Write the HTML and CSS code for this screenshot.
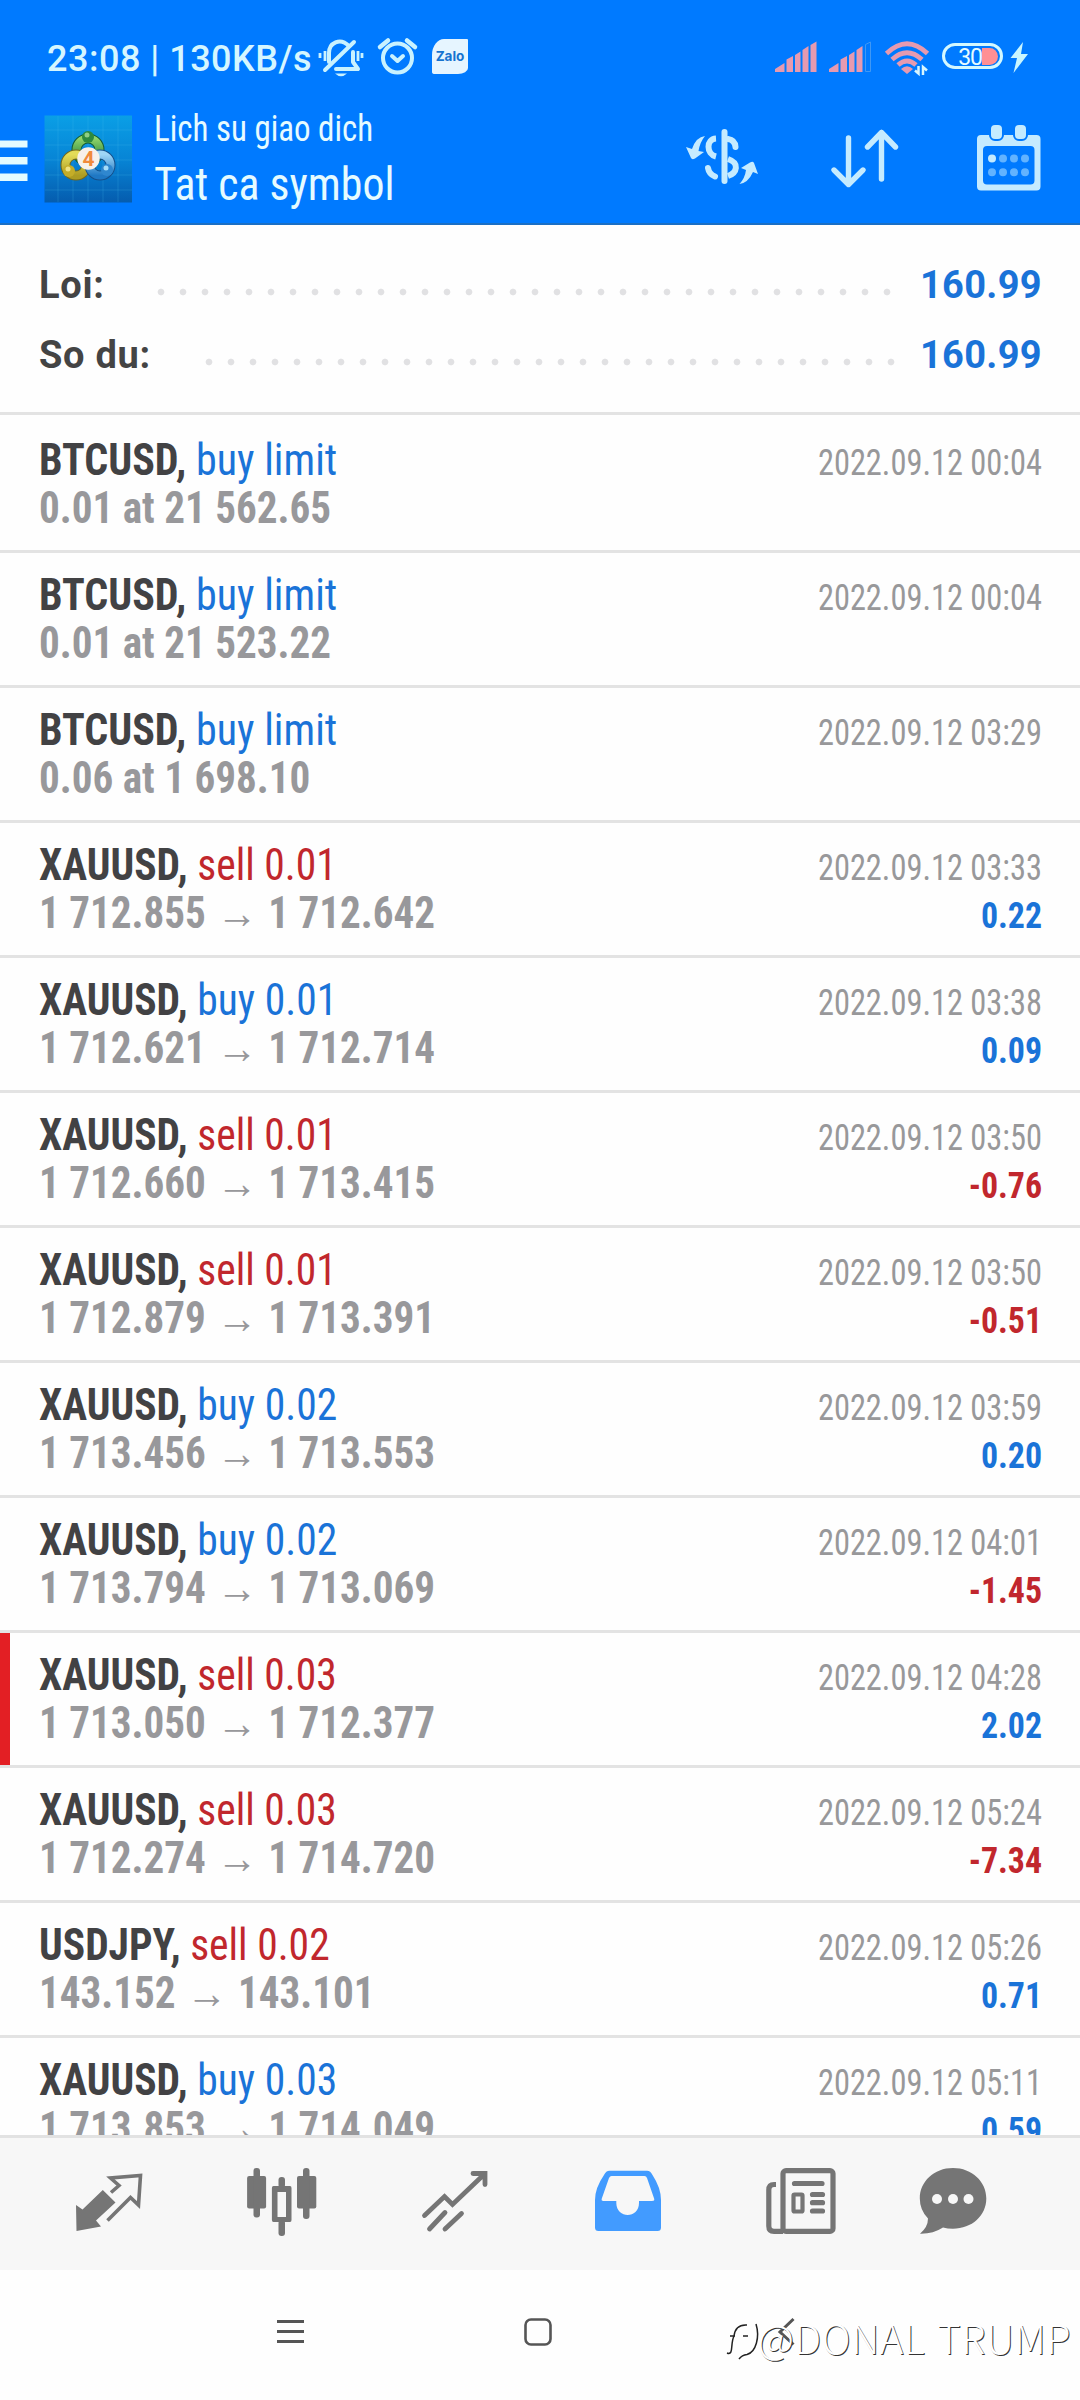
FILE: index.html
```html
<!DOCTYPE html>
<html lang="vi">
<head>
<meta charset="utf-8">
<title>Lich su giao dich</title>
<link rel="stylesheet" href="styles.css">
</head>
<body>
<div class="screen">
  <header class="header">
    <div class="status">
      <span class="status-text">23:08 | 130KB/s</span>
      <svg class="bell" width="46" height="42" viewBox="318 38 46 42" fill="none" stroke="#c9f2ff" stroke-width="4" stroke-linecap="round" stroke-linejoin="round">
        <path d="M350 46C341 37 330 43 330 53V62M354 52V62L359 69H337M326 70L355 42"/>
        <path d="M326 51V61M321 53V58M359 51V61M363 53V58" stroke-width="2.8" stroke-linecap="butt"/>
        <path d="M336 73.5H348Q342 79 336 73.5Z" fill="#c9f2ff" stroke="none"/>
      </svg>
      <svg class="alarm" width="40" height="42" viewBox="378 38 40 42" fill="none" stroke="#c9f2ff" stroke-width="4" stroke-linecap="round" stroke-linejoin="round">
        <circle cx="397.5" cy="58" r="14.500"/>
        <path d="M392 56L397.500 61L403 56"/>
        <path d="M380 47L388 40.500M415 47L407 40.500" stroke-width="4.500"/>
      </svg>
      <span class="zalo">Zalo</span>
      <svg class="signals" width="98" height="42" viewBox="774 38 98 42" fill="#e69ab0">
        <path d="M775 72V69L784.500 63V72ZM786.500 72V59.500L793 56V72ZM795 72V55L800.500 51.500V72ZM802.500 72V50L808.500 46V72ZM810.500 72V45L816.500 41.500V72Z"/>
        <path d="M829 72V69L838.500 63V72ZM840.500 72V59.500L847 56V72ZM849 72V55L854.500 51.500V72ZM856.500 72V50L862.500 46V72Z"/>
        <path d="M865.500 71.500V44.500L870.500 42V71.500Z" fill="none" stroke="#4098f4"/>
      </svg>
      <svg class="wifi" width="45" height="42" viewBox="884 38 45 42" fill="none" stroke="#e69ab0" stroke-width="4.800">
        <path d="M886.500 53.500Q907 34 927.500 53.500M892 59.500Q907 46 922 59.500M898 65Q907 57 916 65"/>
        <path d="M901 69Q907 63.500 913 69L907 74Z" fill="#e69ab0" stroke="none"/>
        <path d="M918.500 66V73.500L915 70.500M923 75V67L927 70.500" stroke="#d8f6ff" stroke-width="2.500"/>
      </svg>
      <span class="battery"><b class="charge"></b><span class="percent">30</span></span>
      <svg class="bolt" width="18" height="42" viewBox="1009 38 18 42" fill="#c9f6ff"><path d="M1022 42L1009.500 58H1016L1012.500 73L1027 54H1020Z"/></svg>
    </div>
    <div class="appbar">
      <svg width="28" height="97" viewBox="0 122 28 97" fill="#e4fbff"><path d="M0 140.500H27.500V147.500H0ZM0 157H27.500V164.500H0ZM0 173.500H27.500V181H0Z"/></svg>
      <svg class="logo" width="88" height="97" viewBox="44 122 88 97">
        <defs>
          <linearGradient id="tile" x1="0" y1="0" x2="0" y2="1"><stop offset="0" stop-color="#0a9fe6"/><stop offset=".5" stop-color="#0785d6"/><stop offset="1" stop-color="#055cae"/></linearGradient>
          <linearGradient id="green" x1="0" y1="0" x2="0" y2="1"><stop offset="0" stop-color="#8fd46a"/><stop offset="1" stop-color="#1c7a36"/></linearGradient>
          <linearGradient id="gold" x1="0" y1="0" x2="0" y2="1"><stop offset="0" stop-color="#e3dc58"/><stop offset="1" stop-color="#ad9c22"/></linearGradient>
          <linearGradient id="sky" x1="0" y1="0" x2="0" y2="1"><stop offset="0" stop-color="#9fd6f6"/><stop offset="1" stop-color="#1f78c4"/></linearGradient>
        </defs>
        <rect x="44.500" y="115.500" width="87.500" height="87" fill="url(#tile)"/>
        <path d="M58 116V202M73 116V202M88 116V202M103 116V202M118 116V202M45 130H132M45 145H132M45 160H132M45 175H132M45 190H132" stroke="#4cc0f0" stroke-opacity=".22" fill="none"/>
        <g fill="none" stroke-width="8">
          <circle cx="88" cy="150" r="11.500" stroke="#145c34" stroke-width="10"/><circle cx="88" cy="150" r="11.500" stroke="url(#green)"/>
          <circle cx="76" cy="165" r="10.500" stroke="#74691b" stroke-width="10"/><circle cx="76" cy="165" r="10.500" stroke="url(#gold)"/>
          <circle cx="100" cy="165" r="10.500" stroke="#154f8a" stroke-width="10"/><circle cx="100" cy="165" r="10.500" stroke="url(#sky)"/>
        </g>
        <circle cx="88" cy="137" r="6" fill="#2d8a3e"/><circle cx="87" cy="135" r="2.500" fill="#8fce84"/>
        <circle cx="69" cy="171" r="6" fill="#c4ad28"/><circle cx="68" cy="169" r="2.500" fill="#efe384"/>
        <circle cx="107" cy="170" r="6" fill="#2f87cf"/><circle cx="106" cy="168" r="2.500" fill="#a5dcf8"/>
        <circle cx="88.500" cy="158.500" r="11.200" fill="#f7f1ea"/>
        <text class="logo-digit" x="88.500" y="166" text-anchor="middle">4</text>
      </svg>
      <div class="titles">
        <span class="subtitle">Lich su giao dich</span>
        <span class="title">Tat ca symbol</span>
      </div>
      <div class="actions">
        <svg width="72" height="97" viewBox="686 122 72 97" fill="none" stroke="#c5ebff" stroke-width="6" stroke-linecap="round">
          <path d="M724.500 132V181"/>
          <path d="M716 138.500C706 139 706 154 716 156.500" stroke-linecap="butt"/>
          <path d="M728 139Q735 140 735.500 147"/>
          <path d="M728 159C740 163 737 173 728 176" stroke-linecap="butt"/>
          <path d="M708 168Q709 174 715 176.500"/>
          <path d="M705 136Q696 137 692 149L686 147L691 158Q692 160 695 158.500L704 152L698.500 151Q700 142 705 136Z" fill="#c5ebff" stroke="none"/>
          <path d="M739.500 184Q748 183 753 172L758 174L754 163Q753 161 750 162.500L741 168L746 170Q745 178 739.500 184Z" fill="#c5ebff" stroke="none"/>
        </svg>
        <svg width="68" height="97" viewBox="831 122 68 97" fill="none" stroke="#c5ebff" stroke-width="5.400" stroke-linecap="round" stroke-linejoin="round">
          <path d="M848.500 138V184.500M834 170L848.500 184.500L863 170M881.500 179V132.500M867.500 147L881.500 132.500L895.500 147"/>
        </svg>
        <svg width="64" height="97" viewBox="977 122 64 97">
          <path d="M981 135H1036.500Q1040.500 135 1040.500 139V186.500Q1040.500 190.500 1036.500 190.500H981Q977 190.500 977 186.500V139Q977 135 981 135ZM987 146Q983 146 983 150V180.500Q983 184.500 987 184.500H1030.500Q1034.500 184.500 1034.500 180.500V150Q1034.500 146 1030.500 146Z" fill="#c5ebff" fill-rule="evenodd"/>
          <g fill="#c5ebff" stroke="#007aff" stroke-width="2"><rect x="990" y="124" width="13" height="16" rx="5"/><rect x="1014" y="124" width="13" height="16" rx="5"/></g>
          <g fill="#62b3ff"><circle cx="1003" cy="158.500" r="4"/><circle cx="1014" cy="158.500" r="4"/><circle cx="1025" cy="158.500" r="4"/><circle cx="992" cy="172.300" r="4"/><circle cx="1003" cy="172.300" r="4"/><circle cx="1014" cy="172.300" r="4"/><circle cx="1025" cy="172.300" r="4"/></g>
          <circle cx="992" cy="158.500" r="4" fill="#c5ebff"/>
        </svg>
      </div>
    </div>
  </header>

  <section class="summary">
    <div class="sum-row"><span class="sum-label">Loi:</span><i class="dots"></i><span class="sum-value">160.99</span></div>
    <div class="sum-row"><span class="sum-label">So du:</span><i class="dots short"></i><span class="sum-value">160.99</span></div>
  </section>

  <main class="list">
    <article class="row first"><div class="left"><p class="deal limit"><b>BTCUSD,</b> <span class="buy">buy limit</span></p><p class="price">0.01 at 21 562.65</p></div><div class="right"><time>2022.09.12 00:04</time></div></article>
    <article class="row"><div class="left"><p class="deal limit"><b>BTCUSD,</b> <span class="buy">buy limit</span></p><p class="price">0.01 at 21 523.22</p></div><div class="right"><time>2022.09.12 00:04</time></div></article>
    <article class="row"><div class="left"><p class="deal limit"><b>BTCUSD,</b> <span class="buy">buy limit</span></p><p class="price">0.06 at 1 698.10</p></div><div class="right"><time>2022.09.12 03:29</time></div></article>
    <article class="row"><div class="left"><p class="deal"><b>XAUUSD,</b> <span class="sell">sell 0.01</span></p><p class="price">1 712.855<span class="to">→</span>1 712.642</p></div><div class="right"><time>2022.09.12 03:33</time><span class="profit buy">0.22</span></div></article>
    <article class="row"><div class="left"><p class="deal"><b>XAUUSD,</b> <span class="buy">buy 0.01</span></p><p class="price">1 712.621<span class="to">→</span>1 712.714</p></div><div class="right"><time>2022.09.12 03:38</time><span class="profit buy">0.09</span></div></article>
    <article class="row"><div class="left"><p class="deal"><b>XAUUSD,</b> <span class="sell">sell 0.01</span></p><p class="price">1 712.660<span class="to">→</span>1 713.415</p></div><div class="right"><time>2022.09.12 03:50</time><span class="profit sell">-0.76</span></div></article>
    <article class="row"><div class="left"><p class="deal"><b>XAUUSD,</b> <span class="sell">sell 0.01</span></p><p class="price">1 712.879<span class="to">→</span>1 713.391</p></div><div class="right"><time>2022.09.12 03:50</time><span class="profit sell">-0.51</span></div></article>
    <article class="row"><div class="left"><p class="deal"><b>XAUUSD,</b> <span class="buy">buy 0.02</span></p><p class="price">1 713.456<span class="to">→</span>1 713.553</p></div><div class="right"><time>2022.09.12 03:59</time><span class="profit buy">0.20</span></div></article>
    <article class="row"><div class="left"><p class="deal"><b>XAUUSD,</b> <span class="buy">buy 0.02</span></p><p class="price">1 713.794<span class="to">→</span>1 713.069</p></div><div class="right"><time>2022.09.12 04:01</time><span class="profit sell">-1.45</span></div></article>
    <article class="row marked"><div class="left"><p class="deal"><b>XAUUSD,</b> <span class="sell">sell 0.03</span></p><p class="price">1 713.050<span class="to">→</span>1 712.377</p></div><div class="right"><time>2022.09.12 04:28</time><span class="profit buy">2.02</span></div></article>
    <article class="row"><div class="left"><p class="deal"><b>XAUUSD,</b> <span class="sell">sell 0.03</span></p><p class="price">1 712.274<span class="to">→</span>1 714.720</p></div><div class="right"><time>2022.09.12 05:24</time><span class="profit sell">-7.34</span></div></article>
    <article class="row"><div class="left"><p class="deal"><b>USDJPY,</b> <span class="sell">sell 0.02</span></p><p class="price">143.152<span class="to">→</span>143.101</p></div><div class="right"><time>2022.09.12 05:26</time><span class="profit buy">0.71</span></div></article>
    <article class="row"><div class="left"><p class="deal"><b>XAUUSD,</b> <span class="buy">buy 0.03</span></p><p class="price">1 713.853<span class="to">→</span>1 714.049</p></div><div class="right"><time>2022.09.12 05:11</time><span class="profit buy">0.59</span></div></article>
  </main>

  <nav class="tabs">
    <a class="tab"><svg width="76" height="88" viewBox="70.500 2160 76 88"><path d="M102.300 2190L115 2202.500L95.500 2220.500L100.500 2226.500L76 2231L75.500 2205L82 2209.500Z" fill="#757575"/><path d="M110.500 2192.500L118.500 2185.500L110 2178L140 2175.500L138 2205L130 2197.500L107 2220.500" fill="none" stroke="#757575" stroke-width="3.600"/></svg></a>
    <a class="tab"><svg width="76" height="88" viewBox="243.500 2160 76 88" fill="#757575"><rect x="246.600" y="2176" width="19" height="32.500" rx="2"/><rect x="253" y="2168" width="6.500" height="49.500" rx="3"/><path d="M273 2186H289.500Q291 2186 291 2188V2220Q291 2222 289.500 2222H273Q271.400 2222 271.400 2220V2188Q271.400 2186 273 2186ZM277 2192V2217H285.500V2192Z" fill-rule="evenodd"/><rect x="278" y="2177" width="6.500" height="11" rx="3"/><rect x="278" y="2220" width="6.500" height="16" rx="3"/><rect x="296.500" y="2176" width="19.300" height="32.500" rx="2"/><rect x="302.500" y="2168" width="6.500" height="51" rx="3"/></svg></a>
    <a class="tab"><svg width="76" height="88" viewBox="416.500 2160 76 88" fill="none" stroke="#757575" stroke-width="4.800" stroke-linecap="round"><path d="M424 2215.500L444 2196.500L452 2204.500L484 2174M472.500 2173.500H484.500V2184.500M444.500 2212.500L429 2229M461 2213.500L444.500 2229"/></svg></a>
    <a class="tab"><svg width="76" height="88" viewBox="589.500 2160 76 88"><path d="M609 2170.700H646.500Q650 2170.700 652 2175Q660.500 2188 660.500 2200V2227.500Q660.500 2231 657 2231H598Q594.500 2231 594.500 2227.500V2200Q594.500 2188 603.500 2175Q605.500 2170.700 609 2170.700ZM611 2176Q609.500 2176 608.500 2178L601.300 2198.500Q600.500 2201 603 2201H615.800V2203C616 2219 638.500 2219 638.500 2203V2201H651.500Q654.500 2201 653.600 2198.500L646.500 2178Q645.800 2176 644 2176Z" fill="#429bff" fill-rule="evenodd"/></svg></a>
    <a class="tab"><svg width="76" height="88" viewBox="763 2160 76 88" fill="none" stroke="#757575" stroke-width="5.200" stroke-linecap="round"><rect x="783" y="2170.600" width="50" height="60.800" rx="3"/><path d="M776 2184.500H774Q768.800 2184.500 768.800 2190V2226Q768.800 2231.400 774 2231.400H783" stroke-linecap="butt"/><path d="M794.500 2183.500H822M812.500 2194.500H822.500M812.500 2202.700H822.500M812.500 2211H822.500"/><rect x="793.500" y="2194.500" width="9" height="17" rx="1" stroke-width="4.200"/></svg></a>
    <a class="tab last"><svg width="76" height="88" viewBox="915 2160 76 88"><path d="M953 2168C972 2168 986.300 2181.500 986.300 2198.500S972 2228.700 953 2228.700Q947.500 2228.700 943 2227.500Q933 2234 920 2233.700Q928 2227 928 2218.500Q919.800 2210 919.800 2198.500C919.800 2181.500 934 2168 953 2168Z" fill="#757575"/><g fill="#f7f7f7"><circle cx="937" cy="2199" r="5"/><circle cx="953" cy="2199" r="5"/><circle cx="968.500" cy="2199" r="5"/></g></svg></a>
  </nav>

  <footer class="sysnav">
    <svg class="recents" width="28" height="30" viewBox="277 2317 28 30"><path d="M277 2321.500H304M277 2331.500H304M277 2341.500H304" stroke="#555" stroke-width="2.800"/></svg>
    <svg class="home" width="30" height="30" viewBox="523 2317 30 30"><rect x="525.500" y="2319.500" width="25" height="25" rx="5.500" fill="none" stroke="#555" stroke-width="2.600"/></svg>
    <svg class="back" width="20" height="30" viewBox="777 2317 20 30"><path d="M793.500 2319L780 2332L793.500 2344.500" fill="none" stroke="#555" stroke-width="3"/></svg>
    <div class="watermark">
      <svg width="36" height="44" viewBox="720 2320 36 44" fill="none" stroke-width="1.500">
        <path d="M725 2358C732 2361 728 2349 732 2341C733 2333 738 2329.500 745 2330M728 2341H733M741 2341H746M754 2329C758 2342 754 2357 745 2359.500Q740 2360 737 2364" stroke="#222"/>
      </svg>
      <span>@DONAL TRUMP</span>
    </div>
  </footer>
</div>
</body>
</html>
```
FILE: styles.css
```css
* { box-sizing: border-box; margin: 0; padding: 0; }
body { width: 1080px; height: 2400px; overflow: hidden; background: #fff; font-family: Roboto, "Noto Sans", sans-serif; }
svg { display: block; flex: none; overflow: visible; }
.screen { width: 1080px; height: 2400px; display: flex; flex-direction: column; background: #fefefe; }

.header { height: 225px; flex: none; background: #007aff; border-bottom: 2px solid #1b6fc4; }
.status { height: 118px; display: flex; align-items: center; padding-left: 47px; color: #d5f6ff; }
.status-text { width: 270px; font-size: 36px; font-weight: 500; letter-spacing: .5px; white-space: nowrap; }
.alarm { margin-left: 15px; }
.zalo { width: 36px; height: 35px; margin: -6px 0 0 14px; background: #e6f5ff; border-radius: 12px 1px 10px 3px / 16px 1px 6px 2px; color: #1673cf; font: 700 13.5px/34px Inter, sans-serif; text-align: center; }
.signals { margin-left: 306px; }
.wifi { margin-left: 12px; }
.battery { width: 61px; height: 26px; margin: -6px 0 0 13px; border: 3px solid #d3f8ff; border-radius: 13px; display: flex; align-items: center; flex-direction: row-reverse; padding-right: 2px; }
.charge { width: 16px; height: 17px; background: #ff8f94; border-radius: 0 9px 9px 0; }
.percent { color: #e6fbff; font-size: 23px; line-height: 20px; padding-top: 3px; letter-spacing: -1px; }
.bolt { margin-left: 7px; }

.appbar { height: 105px; display: flex; align-items: center; padding-right: 39px; }
.logo { margin-left: 16px; }
.logo-digit { font: 700 21px Roboto, sans-serif; fill: #f08a3c; }
.titles { flex: 1; align-self: flex-start; margin-left: 22px; display: flex; flex-direction: column; gap: 14px; color: #e6fbff; font-family: "Roboto Condensed", Roboto, sans-serif; white-space: nowrap; }
.subtitle { font-size: 36px; line-height: 22px; transform: scaleX(.915); transform-origin: left; }
.title { font-size: 46px; line-height: 60px; transform: scaleX(.952); transform-origin: left; }
.actions { display: flex; }
.actions svg + svg { margin-left: 73px; }
.actions svg:last-child { margin-left: 78px; }

.summary { height: 190px; flex: none; padding: 25px 40px 0 39px; border-bottom: 3px solid #e3e3e3; }
.sum-row { height: 70px; display: flex; align-items: center; font-size: 38px; font-weight: 700; letter-spacing: .7px; color: #444; }
.dots { width: 748px; height: 8px; margin: 13px 22px 0 auto; background: radial-gradient(circle, #e1e1e3 2.8px, transparent 3.8px) 0 0 / 22px 8px repeat-x; }
.dots.short { width: 704px; margin-right: 18px; }
.sum-value { width: 120px; color: #1a73d8; letter-spacing: .3px; }

.list { height: 1720px; flex: none; overflow: hidden; font-family: "Roboto Condensed", Roboto, sans-serif; }
.row { height: 135px; display: flex; justify-content: space-between; padding: 19px 38px 0 39px; border-bottom: 3px solid #e3e3e3; white-space: nowrap; }
.row.first { height: 138px; padding-top: 22px; }
/* red edge flags the selected deal */
.row.marked { background: linear-gradient(#e31f24, #e31f24) left / 10px 100% no-repeat; }
.deal, .price { font-size: 43.5px; line-height: 48px; transform-origin: left; }
.deal { color: #424244; transform: scaleX(.955); }
.deal.limit { transform: scaleX(.966); }
.price { color: #98989b; font-weight: 700; transform: scaleX(.945); }
.to { display: inline-block; width: 66px; text-align: center; }
.buy { color: #1a73d8; }
.sell { color: #c1272d; }
.right { display: flex; flex-direction: column; align-items: flex-end; padding-top: 2px; }
time, .profit { font-size: 36px; line-height: 48px; transform-origin: right; }
time { color: #98989a; transform: scaleX(.9); }
.profit { font-weight: 700; transform: scaleX(.94); }

.tabs { height: 135px; flex: none; display: flex; padding-left: 22px; background: #f7f7f7; border-top: 3px solid #e2e2e2; }
.tab { width: 173px; display: flex; align-items: center; justify-content: center; }
.tab.last { width: 132px; }

.sysnav { height: 130px; position: relative; display: flex; align-items: center; padding: 0 0 6px 277px; }
.home { margin-left: 218px; }
.back { margin-left: 224px; }
/* author mark printed over the navigation bar */
.watermark { position: absolute; right: 9px; top: 45px; display: flex; align-items: center; height: 44px; }
.watermark span { margin-left: 0; font: 300 40px/44px "Noto Sans CJK SC", "Noto Sans", sans-serif; letter-spacing: .4px; word-spacing: 3px; color: #fff; text-shadow: 1px 1px 0 #333; white-space: nowrap; }
```
